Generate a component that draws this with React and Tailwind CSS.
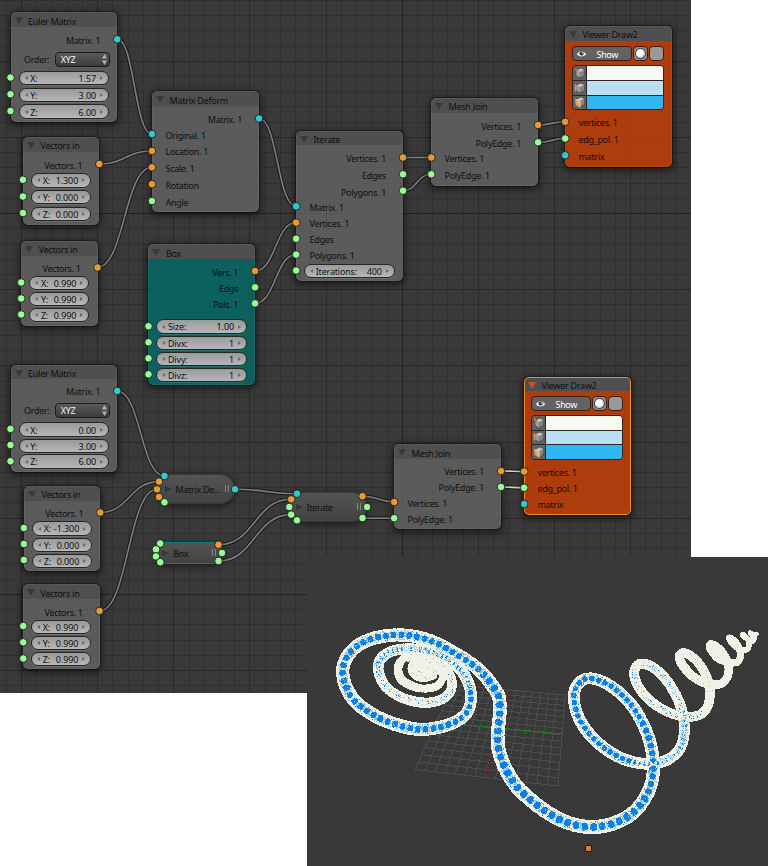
import React from "react";

const COLORS = { o: "#e89a33", g: "#98fb98", t: "#30cbce" };

const OUT = "out";
const IN = "in";

/* Rows are [kind, centreY, ...content]; centreY is measured on the canvas. */
const NODES = [
  { title: "Euler Matrix", x: 10.5, y: 12.3, w: 106.8, h: 110, rows: [[OUT, 40.7, "Matrix. 1"], ["order", 59.3], ["num", 78, "X:", "1.57"], ["num", 95, "Y:", "3.00"], ["num", 111.8, "Z:", "6.00"]] },
  { title: "Vectors in", x: 23, y: 137, w: 76.4, h: 87.5, rows: [[OUT, 165.8, "Vectors. 1"], ["num", 180.3, "X:", "1.300"], ["num", 197.2, "Y:", "0.000"], ["num", 213.9, "Z:", "0.000"]] },
  { title: "Vectors in", x: 21.2, y: 241, w: 76.4, h: 85, rows: [[OUT, 268.8, "Vectors. 1"], ["num", 283, "X:", "0.990"], ["num", 299, "Y:", "0.990"], ["num", 315, "Z:", "0.990"]] },
  { title: "Matrix Deform", x: 152, y: 91.2, w: 107, h: 120.8, rows: [[OUT, 119.7, "Matrix. 1"], [IN, 135.8, "Original. 1"], [IN, 152, "Location. 1"], [IN, 169, "Scale. 1"], [IN, 186, "Rotation"], [IN, 203, "Angle"]] },
  { title: "Box", x: 148.3, y: 244.3, w: 106.9, h: 140.6, kind: "teal", rows: [[OUT, 272.8, "Vers. 1"], [OUT, 288.9, "Edgs"], [OUT, 304.8, "Pols. 1"], ["num", 326.7, "Size:", "1.00"], ["num", 342.9, "Divx:", "1"], ["num", 358.9, "Divy:", "1"], ["num", 374.9, "Divz:", "1"]] },
  { title: "Iterate", x: 296, y: 130.7, w: 107, h: 150.6, rows: [[OUT, 158.8, "Vertices. 1"], [OUT, 176, "Edges"], [OUT, 192.8, "Polygons. 1"], [IN, 208, "Matrix. 1"], [IN, 224, "Vertices. 1"], [IN, 240, "Edges"], [IN, 256, "Polygons. 1"], ["num", 271, "Iterations:", "400"]] },
  { title: "Mesh Join", x: 431, y: 98, w: 107, h: 87.6, rows: [[OUT, 127, "Vertices. 1"], [OUT, 144, "PolyEdge. 1"], [IN, 159, "Vertices. 1"], [IN, 176, "PolyEdge. 1"]] },
  { title: "Viewer Draw2", x: 565, y: 26, w: 107, h: 140.6, kind: "viewer", rows: [["show", 53.8], ["swatches", 87.7], [IN, 123, "vertices. 1"], [IN, 140, "edg_pol. 1"], [IN, 157, "matrix"]] },
  { title: "Euler Matrix", x: 10.5, y: 364.7, w: 106.8, h: 107.3, rows: [[OUT, 392, "Matrix. 1"], ["order", 410.4], ["num", 429.8, "X:", "0.00"], ["num", 445.9, "Y:", "3.00"], ["num", 461.8, "Z:", "6.00"]] },
  { title: "Vectors in", x: 24, y: 486, w: 76.4, h: 85, rows: [[OUT, 514, "Vectors. 1"], ["num", 528.7, "X:", "-1.300"], ["num", 544.9, "Y:", "0.000"], ["num", 560.9, "Z:", "0.000"]] },
  { title: "Vectors in", x: 23, y: 584.3, w: 76.6, h: 85, rows: [[OUT, 612.8, "Vectors. 1"], ["num", 626.9, "X:", "0.990"], ["num", 642.9, "Y:", "0.990"], ["num", 659, "Z:", "0.990"]] },
  { title: "Mesh Join", x: 394, y: 444.3, w: 107, h: 84.6, rows: [[OUT, 471.8, "Vertices. 1"], [OUT, 488, "PolyEdge. 1"], [IN, 504, "Vertices. 1"], [IN, 520, "PolyEdge. 1"]] },
  { title: "Viewer Draw2", x: 524, y: 376.5, w: 107, h: 138.3, kind: "selected", rows: [["show", 404], ["swatches", 437.5], [IN, 473, "vertices. 1"], [IN, 489, "edg_pol. 1"], [IN, 505, "matrix"]] },
];

const COLLAPSED = [
  { title: "Matrix De...", x: 157, y: 473.7, w: 77.5, h: 30.6, pad: 18.5 },
  { title: "Iterate", x: 289, y: 491.5, w: 78, h: 30.6, pad: 17.5 },
  { title: "Box", x: 156, y: 541.8, w: 66, h: 22, pad: 17.3, teal: true },
];

const SOCKETS = [
  ["t", 117.2, 39.3], ["g", 10.5, 77.5], ["g", 10.5, 94.2], ["g", 10.5, 111],
  ["o", 99.3, 164], ["g", 23, 179.7], ["g", 23, 196.5], ["g", 23, 213],
  ["o", 97.5, 267.5], ["g", 21.2, 282.5], ["g", 21.2, 298.5], ["g", 21.2, 314.5],
  ["t", 259, 118.5], ["t", 152, 134], ["o", 152, 151], ["o", 152, 167.3], ["o", 152, 184.2], ["g", 152, 201],
  ["o", 255, 271], ["g", 255, 287.3], ["g", 255, 303.4], ["g", 148.5, 326.2], ["g", 148.5, 342.3], ["g", 148.5, 358.3], ["g", 148.5, 374.3],
  ["o", 403, 157.5], ["g", 403, 174.3], ["g", 403, 190.7], ["t", 296.2, 206.3], ["o", 296.2, 222.6], ["g", 296.2, 238.7], ["g", 296.2, 254.6], ["g", 296.2, 270.5],
  ["o", 538, 125], ["g", 538, 142.3], ["o", 431.3, 157.5], ["g", 431.3, 174.3],
  ["o", 565.2, 121.8], ["g", 565.2, 138.5], ["t", 565.2, 155.3],
  ["t", 117.2, 391], ["g", 10.5, 428.9], ["g", 10.5, 445], ["g", 10.5, 461.2],
  ["o", 100.3, 512.5], ["g", 24, 528], ["g", 24, 544], ["g", 24, 560],
  ["o", 99.5, 611], ["g", 23.3, 626], ["g", 23.3, 642.3], ["g", 23.3, 658.5],
  ["t", 164.5, 476], ["o", 159, 481.6], ["o", 157, 489.3], ["o", 159, 497], ["g", 164.5, 502.3], ["t", 235, 489.3],
  ["g", 160.2, 543.5], ["g", 156, 549.4], ["g", 156, 556.4], ["g", 160.3, 562.2], ["o", 218.5, 544.8], ["g", 222, 553], ["g", 218.5, 561],
  ["t", 297, 493.7], ["o", 291.2, 499.3], ["g", 289.3, 507], ["g", 291.2, 514.6], ["g", 297, 520.3], ["o", 362.5, 496.2], ["g", 367, 507], ["g", 362.5, 518],
  ["o", 501, 471], ["g", 501, 487], ["o", 394.2, 502], ["g", 394.2, 518.2],
  ["o", 524.2, 471.5], ["g", 524.2, 487.8], ["t", 524.2, 504],
];

const LINKS = [
  [117, 39, 152, 134], [99, 164, 152, 151], [97, 267.5, 152, 167.3], [259, 118.5, 296, 206.3],
  [255, 271, 296, 222.6], [255, 303.4, 296, 254.6], [403, 157.5, 431, 157.5], [403, 190.7, 431, 174.3],
  [538, 125, 565, 121.8], [538, 142.3, 565, 138.5], [117, 391, 164.5, 476], [100, 512.5, 159, 481.6],
  [99.5, 611, 157, 489.3], [235, 489.3, 297, 493.7], [218.5, 544.8, 291, 499.3], [218.5, 561, 291, 514.6],
  [362.5, 496.2, 394, 502], [362.5, 518.2, 394, 518.2], [501, 471, 524, 471.5, 1], [501, 487, 524, 487.8, 1],
];

function linkPath([x1, y1, x2, y2]) {
  const k = (x2 - x1) * 0.5;
  return `M${x1} ${y1}C${x1 + k} ${y1} ${x2 - k} ${y2} ${x2} ${y2}`;
}

function EditorGrid() {
  const lines = [];
  for (let i = -2; i < 46; i++) {
    const major = (((i % 5) + 5) % 5) === 0;
    const vx = Math.round(21.5 + i * 15.23 - 0.5);
    const hy = Math.round(61.3 + (i - 3) * 15.23 - 0.5);
    const hMajor = ((((i - 3) % 5) + 5) % 5) === 0;
    lines.push([vx, 0, 1, 693, major, `v${i}`], [0, hy, 691, 1, hMajor, `h${i}`]);
  }
  lines.sort((a, b) => a[4] - b[4]);
  return (
    <g>
      {lines.map(([x, y, w, h, m, k]) => (
        <rect key={k} x={x} y={y} width={w} height={h} fill={m ? "#292929" : "#303030"} />
      ))}
      <rect x="402" y="0" width="1" height="693" fill="#222222" />
      <rect x="0" y="213" width="691" height="1" fill="#222222" />
      <rect x="0" y="594" width="691" height="1" fill="#242424" />
    </g>
  );
}

function NumberField({ label, value }) {
  return (
    <div className="mx-[8.2px] flex h-[14.6px] flex-1 items-center rounded-full border border-[#262626] bg-linear-to-b from-[#9a9a9a] to-[#b7b7b7] px-[5px] text-[#101010] shadow-[0_1px_0_rgba(255,255,255,0.12)]">
      <span className="h-0 w-0 border-y-[2.5px] border-r-[3.5px] border-y-transparent border-r-[#6c6c6c]" />
      <span className="ml-[2.5px] pt-[1.5px] tracking-[-0.02em]">{label}</span>
      <span className="ml-auto mr-[4px] pt-[1.5px] tracking-[-0.01em]">{value}</span>
      <span className="h-0 w-0 border-y-[2.5px] border-l-[3.5px] border-y-transparent border-l-[#6c6c6c]" />
    </div>
  );
}

function OrderRow() {
  return (
    <div className="flex flex-1 items-center pl-[13.5px] pr-[7.5px]">
      <span className="pt-px">Order:</span>
      <div className="ml-auto flex h-[15px] w-[55px] items-center justify-between rounded-[4px] border border-[#1c1c1c] bg-linear-to-b from-[#5a5a5a] to-[#3c3c3c] pl-[5px] pr-[2px] text-[#f2f2f2]">
        <span className="pt-px">XYZ</span>
        <svg width="5" height="11" viewBox="0 0 5 11">
          <path d="M0 4.5L2.5 0L5 4.5ZM0 6.5L2.5 11L5 6.5Z" fill="#b4b4b4" />
        </svg>
      </div>
    </div>
  );
}

function ShowRow() {
  return (
    <div className="flex flex-1 items-center gap-px pl-[7px] pr-[8.5px]">
      <div className="flex h-[15px] w-[60px] items-center rounded-[4px] border border-[#3a1d10] bg-[#626262] pl-[3px] text-white">
        <svg width="11" height="8" viewBox="0 0 11 8">
          <path d="M0.5 4.2Q5.5 -1.8 10.5 4.2Q5.5 9 0.5 4.2Z" fill="#e8e8e8" />
          <circle cx="5.6" cy="3.6" r="2" fill="#2b2b2b" />
          <circle cx="6.2" cy="3" r="0.7" fill="#ffffff" />
        </svg>
        <span className="ml-[9.5px] pt-[1.5px]">Show</span>
      </div>
      <div className="flex h-[15px] w-[15px] items-center justify-center rounded-[4px] border border-[#3a1d10] bg-[#8b8b8b]">
        <span className="h-[11px] w-[11px] rounded-full border border-[#3c3c3c] bg-radial-[at_35%_35%] from-white from-40% to-[#a0a0a0]" />
      </div>
      <div className="h-[15px] w-[15px] rounded-[4px] border border-[#3a1d10] bg-[#999999]" />
    </div>
  );
}

function CubeIcon({ mode }) {
  return (
    <svg width="12" height="12" viewBox="0 0 12 12" className="shrink-0">
      <path d="M1.6 3.4L6.8 1L11 2.8L6.2 5.2Z" fill="#c4c4c4" />
      <path d="M1.6 3.4L6.2 5.2V11.2L2.1 8.9Z" fill={mode === 2 ? "#fba54e" : "#9d9d9d"} />
      <path d="M6.2 5.2L11 2.8L10.6 8.6L6.2 11.2Z" fill="#848484" />
      <path d="M1.6 3.4L6.8 1L11 2.8L10.6 8.6L6.2 11.2L2.1 8.9Z" fill="none" stroke="#333333" strokeWidth="0.6" />
      {mode === 0 && <rect x="0.8" y="1.4" width="2.4" height="2.4" fill="#f0983a" stroke="#7a3c08" strokeWidth="0.5" />}
      {mode === 1 && <path d="M1.5 2.4V9.2" stroke="#f0983a" strokeWidth="1.4" />}
      {mode === 2 && <path d="M1.6 3.4L6.2 5.2V11.2L2.1 8.9Z" fill="none" stroke="#fcd9ac" strokeWidth="0.7" />}
    </svg>
  );
}

function Swatches() {
  const fills = ["bg-[#f8f9f3]", "bg-[#b9e0f1]", "bg-[#30b6f3]"];
  return (
    <div className="ml-[7px] flex h-[45px] w-[91.5px] flex-col divide-y divide-[#2c2420] overflow-hidden rounded-[4px] border border-[#2c2420]">
      {fills.map((f, i) => (
        <div key={f} className="flex flex-1">
          <div className="flex w-[14px] items-center justify-center border-r border-[#2c2420] bg-[#626262]">
            <CubeIcon mode={i} />
          </div>
          <div className={`flex-1 ${f}`} />
        </div>
      ))}
    </div>
  );
}

function Row({ row, gap }) {
  const [kind, , a, b] = row;
  return (
    <div className={`flex shrink-0 items-center ${kind === "swatches" ? "h-[45px]" : "h-[15px]"}`} style={{ marginTop: gap }}>
      {kind === OUT && <span className="ml-auto pr-[17px]">{a}</span>}
      {kind === IN && <span className="pl-[13.5px]">{a}</span>}
      {kind === "num" && <NumberField label={a} value={b} />}
      {kind === "order" && <OrderRow />}
      {kind === "show" && <ShowRow />}
      {kind === "swatches" && <Swatches />}
    </div>
  );
}

const BODY = {
  gray: "bg-[#616161]/86",
  teal: "bg-[#0a6361]/94",
  viewer: "bg-[#b43c0a]/96",
  selected: "bg-[#b43c0a]/96",
};

function Node({ node }) {
  const kind = node.kind || "gray";
  let bottom = node.y + 14.7;
  return (
    <div
      className={`absolute flex flex-col overflow-hidden rounded-[5px] shadow-[0_2px_7px_2px_rgba(0,0,0,0.5)] outline-1 outline-black/30 ${BODY[kind]}`}
      style={{ left: node.x, top: node.y, width: node.w, height: node.h }}
    >
      <div className="flex h-[14.7px] shrink-0 items-center bg-[#4f4f4f] pl-[4px] pt-[4px]">
        <span
          className={`mb-[1.5px] h-0 w-0 border-x-[4px] border-t-[7.6px] border-x-transparent ${kind === "selected" ? "border-t-[#c4541b]" : "border-t-[#3a3a3a]"}`}
        />
        <span className="ml-[5.6px] tracking-[-0.03em]">{node.title}</span>
      </div>
      {node.rows.map((row, i) => {
        const height = row[0] === "swatches" ? 45 : 15;
        const gap = row[1] - height / 2 - bottom;
        bottom = row[1] + height / 2;
        return <Row key={i} row={row} gap={gap} />;
      })}
      <div
        className={`pointer-events-none absolute inset-0 rounded-[5px] border ${kind === "selected" ? "border-[#ee8f2e]" : "border-white/5"}`}
      />
    </div>
  );
}

function CollapsedNode({ node }) {
  return (
    <div
      className={`absolute flex items-center border bg-linear-to-b from-[#555555]/95 to-[#434343]/95 pr-[5px] shadow-[0_2px_6px_1px_rgba(0,0,0,0.45)] ${node.teal ? "rounded-[9px] border-[#0e7c7a]" : "rounded-full border-[#3a3a3a]"}`}
      style={{ left: node.x, top: node.y, width: node.w, height: node.h, paddingLeft: node.pad - 12 }}
    >
      <span className="h-0 w-0 border-y-[3.5px] border-l-[7px] border-y-transparent border-l-[#363636]" />
      <span className="ml-[4px] pt-[2px]">{node.title}</span>
      <span className="ml-auto h-[7px] w-[4px] border-x border-[#858585]" />
    </div>
  );
}

/* Tube centre line: [x, y, radius] in page pixels. */
const TUBE = [
  [423, 676, 4], [433, 675, 4], [439, 670, 4], [441.3, 680, 3.6], [433.7, 687, 3.8], [417, 687.3, 3.8], [402, 680, 3.8], [398.3, 668.3, 3.8], [403.7, 659.3, 3.8], [420, 655, 4],
  [440, 662, 4], [451, 678, 4.2], [450.3, 691.7, 4.2], [440.3, 700, 4.3], [423.7, 702.7, 4.5], [402, 697.7, 4.5], [385.3, 686, 4.5], [378.3, 670, 4.7],
  [381.3, 658.3, 4.7], [393.7, 650.6, 4.8], [413.7, 649, 4.9], [435.3, 653.3, 5], [453.7, 663.3, 5.1], [466.3, 678.3, 5.1], [471, 696.7, 5.2], [466.3, 713.3, 5.4],
  [450.3, 724, 5.7], [425.3, 729.3, 5.9], [403.7, 726.7, 6.1], [378.7, 717.7, 6.1], [357, 703.3, 6.1], [346.3, 687.3, 6.1], [342.7, 671.7, 6], [346.3, 658.3, 6],
  [357, 646, 6], [373.7, 638.3, 6], [395.3, 635, 5.9], [415.3, 636.5, 6], [435.3, 642.7, 6], [450.3, 650.7, 6], [467, 660.7, 6], [480.3, 671, 6.1],
  [492, 685, 6.2], [498.7, 696.7, 6.2], [499.7, 713, 6.2], [497.7, 733, 6.3], [498.7, 750, 6.4], [505, 767.7, 6.5], [516.3, 786, 6.6], [532, 801, 6.6],
  [550, 814, 6.5], [570, 823.5, 6.4], [591.7, 827, 6.4], [613.3, 823.5, 6.4], [633.3, 812.5, 6.3], [646.7, 795, 6.1], [652.7, 776.7, 6], [652.7, 756.7, 5.8],
  [648.3, 736.7, 5.7], [640, 718.3, 5.6], [630, 703.3, 5.5], [615, 689, 5.4], [598.3, 680, 5.3], [585, 679, 5.2], [575.5, 688, 5.2], [574.5, 704, 5.3],
  [581.7, 723.3, 5.4], [596.7, 741.7, 5.4], [618.3, 756.7, 5.3], [641.7, 763.5, 5.1], [663.3, 761.5, 5], [678.3, 751, 4.9], [684, 735, 4.8], [683.3, 716.7, 4.7],
  [676.7, 696.7, 4.6], [665, 678.3, 4.5], [651.7, 666.7, 4.5], [640, 664, 4.4], [634.2, 671.7, 4.3], [637.5, 685, 4.3], [648.3, 699, 4.3], [663.3, 709.7, 4.2],
  [680, 715.7, 4.2], [696.7, 716, 4.2], [706.7, 708.3, 4.1], [710, 693.3, 4.1], [706.7, 676.7, 4], [696.7, 661, 4], [685, 653, 4], [679.5, 656, 4],
  [682.5, 665, 4], [693.3, 676.7, 3.9], [706.7, 683.5, 3.9], [720, 684, 3.6], [727.3, 676.7, 3.5], [728.3, 665, 3.6], [721.7, 651.7, 3.6], [712, 644.3, 3.5],
  [710.5, 649, 3.5], [718.3, 658.3, 3.4], [729, 662.4, 3.1], [738, 661.5, 3], [740.5, 653, 3], [735.5, 642, 2.8], [729.5, 638, 2.8], [733, 644, 2.6],
  [741, 650, 2.4], [748, 648.5, 2.2], [748, 640, 2.2], [742.5, 634.5, 2.2], [746, 638, 2.2], [752, 641, 2.2], [754.5, 637, 2.2], [749.5, 632.5, 1.8], [753, 635.5, 2], [757, 633.5, 2],
];

function hash(x, y) {
  const v = Math.sin(x * 127.1 + y * 311.7) * 43758.5453;
  return v - Math.floor(v);
}

function catmull(a, b, c, d, t) {
  return 0.5 * (2 * b + (c - a) * t + (2 * a - 5 * b + 4 * c - d) * t * t + (3 * b - a - 3 * c + d) * t * t * t);
}

function rasterTube() {
  const cells = new Map();
  let bead = 0;
  let px = TUBE[0][0];
  let py = TUBE[0][1];
  for (let i = 0; i < TUBE.length - 1; i++) {
    const p0 = TUBE[Math.max(0, i - 1)];
    const p1 = TUBE[i];
    const p2 = TUBE[i + 1];
    const p3 = TUBE[Math.min(TUBE.length - 1, i + 2)];
    const n = Math.max(4, Math.ceil(Math.hypot(p2[0] - p1[0], p2[1] - p1[1]) * 2));
    for (let j = 0; j < n; j++) {
      const t = j / n;
      const x = catmull(p0[0], p1[0], p2[0], p3[0], t);
      const y = catmull(p0[1], p1[1], p2[1], p3[1], t);
      const r = p1[2] + (p2[2] - p1[2]) * t;
      const step = Math.hypot(x - px, y - py);
      const dx = step ? (x - px) / step : 1;
      const dy = step ? (y - py) / step : 0;
      bead += step / (r > 6.15 ? 8.8 : r > 5.6 ? 7.8 : r > 5.15 ? 7 : 4.6);
      px = x;
      py = y;
      const phase = bead - Math.floor(bead);
      const reach = r + (phase < 0.6 ? 0.7 : -0.2);
      for (let cy = Math.floor(y - r - 1); cy <= y + r + 1; cy++) {
        for (let cx = Math.floor(x - r - 1); cx <= x + r + 1; cx++) {
          const ox = cx + 0.5 - x;
          const oy = cy + 0.5 - y;
          const d = Math.hypot(ox, oy);
          if (d > reach) continue;
          const key = cy * 1000 + cx;
          const old = cells.get(key);
          if (old && old.d <= d) continue;
          cells.set(key, { d, u: ox * -dy + oy * dx, r, phase });
        }
      }
    }
  }
  const paths = ["", "", ""];
  for (const [key, c] of cells) {
    const x = key % 1000;
    const y = Math.floor(key / 1000);
    const n = hash(x, y);
    const a = Math.abs(c.u);
    let tone = 0;
    if (c.r >= 5.15) {
      const core = c.r > 6.1 ? 3.4 : c.r > 5.6 ? 2.9 : 2.3;
      const along = Math.abs(c.phase - 0.35) / 0.35;
      if (along < 1 && a < core * (1.15 - along * along * 0.45)) tone = n < 0.97 ? 2 : 1;
      else if (a < core) tone = n < 0.55 ? 1 : 0;
      else if (a < core + 2) tone = n < 0.24 ? 1 : n > 0.95 ? 2 : 0;
    } else if (c.r >= 4.65) {
      if (a < 2.4) tone = c.phase < 0.4 && n < 0.5 ? 2 : n > 0.74 ? 1 : 0;
      else if (a < 4) tone = n < 0.16 ? 1 : 0;
    } else if (c.r >= 4.15) {
      if (a < 2.6) tone = n < 0.05 ? 2 : n < 0.16 ? 1 : 0;
    } else if (c.r >= 3.9) {
      tone = n < 0.03 ? 1 : 0;
    }
    paths[tone] += `M${x} ${y}h1v1h-1z`;
  }
  return paths;
}

const [CREAM, SKY, BLUE] = rasterTube();

/* Floor plane: projective map of the unit square onto its four screen corners. */
function floorPoint(u, v) {
  const A = [453, 685], B = [565.3, 695], C = [558, 786], D = [415.3, 769.5];
  const sx = A[0] - B[0] + C[0] - D[0];
  const sy = A[1] - B[1] + C[1] - D[1];
  const dx1 = B[0] - C[0], dx2 = D[0] - C[0], dy1 = B[1] - C[1], dy2 = D[1] - C[1];
  const den = dx1 * dy2 - dx2 * dy1;
  const g = (sx * dy2 - dx2 * sy) / den;
  const h = (dx1 * sy - sx * dy1) / den;
  const a = B[0] - A[0] + g * B[0], b = D[0] - A[0] + h * D[0];
  const d = B[1] - A[1] + g * B[1], e = D[1] - A[1] + h * D[1];
  const w = g * u + h * v + 1;
  return `${((a * u + b * v + A[0]) / w).toFixed(1)} ${((d * u + e * v + A[1]) / w).toFixed(1)}`;
}

function Viewport() {
  let floor = "";
  for (let i = 0; i <= 14; i++) {
    const k = i / 14;
    floor += `M${floorPoint(k, 0)}L${floorPoint(k, 1)}M${floorPoint(0, k)}L${floorPoint(1, k)}`;
  }
  return (
    <div className="absolute left-[307px] top-[557px] h-[309px] w-[461px] bg-[#393939]">
      <svg width="461" height="309" viewBox="307 557 461 309" shapeRendering="crispEdges">
        <path d={floor} stroke="#4c4c4c" fill="none" />
        <path d="M434 722L563 734" stroke="#178217" />
        <path d="M509.5 691.5L485.5 777.5" stroke="#7f1a1a" />
        <path d={CREAM} fill="#f0f2e6" />
        <ellipse cx="423.5" cy="668.5" rx="16" ry="13.5" fill="#f0f2e6" />
        <path d={SKY} fill="#85c3e8" />
        <path d={BLUE} fill="#0a7fe6" />
        <path d="M407 662Q401.500 667 404 673Q409 681 421 683.500Q432 684.500 436.500 680Q438.500 678 437.500 675" fill="none" stroke="#393939" strokeWidth="1.8" />
        <path d="M418 671h2v1h-2zM421 672h1v1h-1zM424 677h2v1h-2zM411 665h1v1h-1zM429 662h2v1h-2zM427 668h1v1h-1zM416 675h1v1h-1zM433 672h1v1h-1z" fill="#85c3e8" />
        <rect x="585.5" y="845.5" width="6" height="6" rx="2" fill="#c8853b" stroke="#1d140b" />
      </svg>
    </div>
  );
}

export default function App() {
  return (
    <div className="relative h-[866px] w-[768px] overflow-hidden bg-white font-['Noto_Sans','Open_Sans',sans-serif] text-[9px] leading-[12px] tracking-[-0.035em] whitespace-nowrap text-[#101010]">
      <div className="relative h-[693px] w-[691px] overflow-hidden bg-[#393939]">
        <svg className="absolute inset-0" width="691" height="693">
          <EditorGrid />
          {LINKS.map((l, i) => (
            <g key={i} fill="none">
              <path d={linkPath(l)} stroke="#1e1e1e" strokeWidth="3.8" />
              <path d={linkPath(l)} stroke={l[4] ? "#d0d0d0" : "#7e7e7e"} strokeWidth="1.6" />
            </g>
          ))}
        </svg>
        {NODES.map((n, i) => (
          <Node key={i} node={n} />
        ))}
        {COLLAPSED.map((n) => (
          <CollapsedNode key={n.title} node={n} />
        ))}
        <svg className="absolute inset-0" width="691" height="693">
          {SOCKETS.map(([c, x, y], i) => (
            <circle key={i} cx={x} cy={y} r="3.8" fill={COLORS[c]} stroke="#1f1f1f" strokeWidth="0.9" />
          ))}
        </svg>
      </div>
      <Viewport />
    </div>
  );
}
